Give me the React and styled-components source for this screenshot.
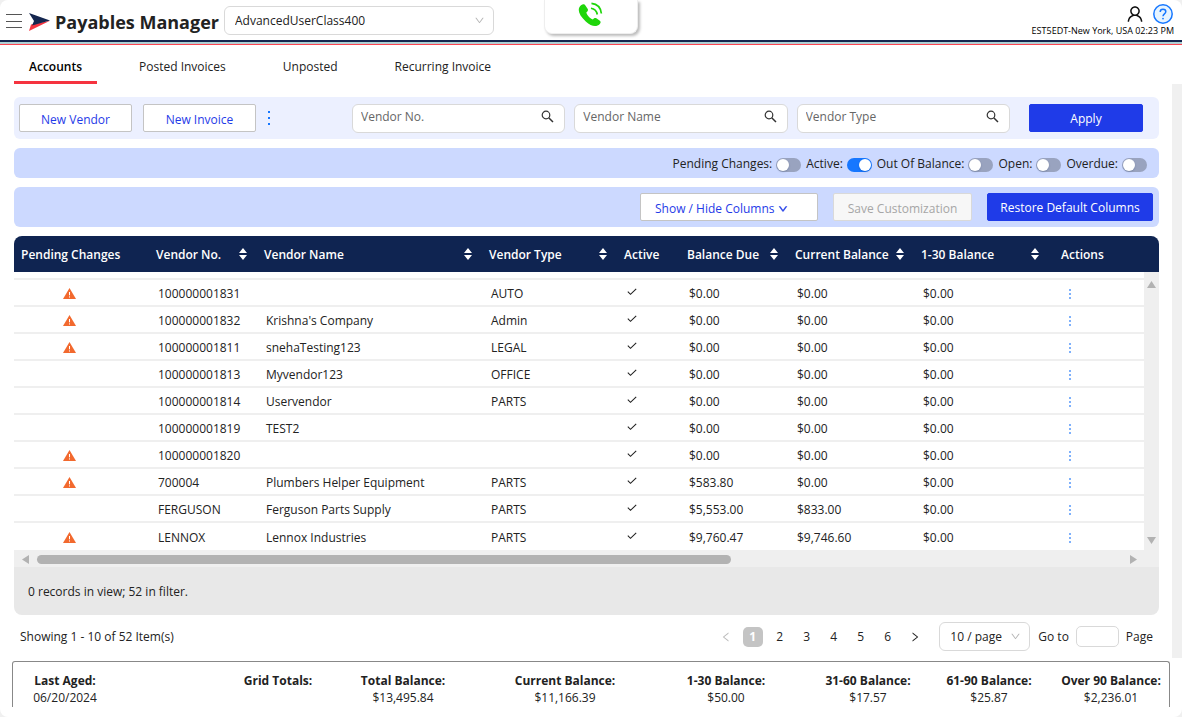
import React from "react";
import styled, { createGlobalStyle, css } from "styled-components";
import {
  AiOutlineUser,
  AiOutlineDown,
  AiOutlineLeft,
  AiOutlineRight,
} from "react-icons/ai";

const GlobalStyle = createGlobalStyle`
  * { box-sizing: border-box; }
  body { margin: 0; background: #f0f0f0; }
  body, button, input, select {
    font-family: "Open Sans", "Noto Sans", sans-serif;
    font-size: 12px;
    color: #222;
  }
`;

const Page = styled.div`
  display: flex;
  flex-direction: column;
  min-height: 100vh;
  background: #fff;
  border-radius: 8px;
  overflow: hidden;
`;

// ---------- header ----------
const Header = styled.header`
  display: flex;
  align-items: center;
  height: 40px;
  padding: 0 8px 0 6px;
`;

const IconButton = styled.button`
  display: flex;
  align-items: center;
  justify-content: center;
  padding: 0;
  border: 0;
  background: none;
  color: #111;
  cursor: pointer;
`;

const RowMenu = styled(IconButton)`
  margin-left: 5px;
`;

const Logo = styled.svg`
  margin: 4px 5px 0 7px;
`;

const Title = styled.h1`
  margin: 4px 5px 0 0;
  font-size: 18px;
  line-height: 24px;
  font-weight: 700;
  white-space: nowrap;
`;

const SelectWrap = styled.div`
  display: flex;
  align-items: center;
  position: relative;
  width: ${(p) => p.$width};
  color: #b5b5b5;

  svg {
    position: absolute;
    right: ${(p) => p.$arrow};
    pointer-events: none;
  }
`;

const Select = styled.select`
  appearance: none;
  width: 100%;
  height: 29px;
  padding: 0 10px;
  border: 1px solid #d9d9d9;
  border-radius: 6px;
  background: #fff;
  cursor: pointer;
`;

const PhoneTab = styled.button`
  display: flex;
  align-items: center;
  justify-content: center;
  align-self: flex-start;
  width: 94px;
  height: 34px;
  margin-left: 50px;
  padding: 0 2px 5px 0;
  border: 1px solid #eee;
  border-top: 0;
  border-radius: 0 0 8px 8px;
  background: #fff;
  box-shadow: 2px 2px 3px #bbb;
  cursor: pointer;
`;

const UserArea = styled.div`
  display: flex;
  flex-direction: column;
  align-items: flex-end;
  margin-left: auto;
  padding-top: 1px;
`;

const UserIcons = styled.div`
  display: flex;
  align-items: center;
  gap: 8px;
  padding-right: 1px;
`;

const Clock = styled.span`
  font-size: 9px;
  line-height: 14px;
  color: #000;
`;

const Stripes = styled.div`
  height: 5px;
  background: linear-gradient(
    #14264f 2px,
    #a9d3d6 2px 3px,
    #b9c9d0 3px 4px,
    #fa4550 4px
  );
`;

// ---------- tabs ----------
const Tabs = styled.nav`
  display: flex;
  gap: 27px;
  padding-left: 14px;
`;

const Tab = styled.a`
  height: 39px;
  padding: 13px 15px 0;
  line-height: 18px;
  color: #222;
  text-decoration: none;
  ${(p) =>
    p.$active &&
    css`
      font-weight: 600;
      color: #000;
      border-bottom: 3px solid #f5333f;
    `}
`;

const Body = styled.div`
  display: flex;
  flex: 1;
`;

const Content = styled.main`
  flex: 1;
  min-width: 0;
  padding: 13px 13px 7px 14px;
`;

const PageScroll = styled.div`
  width: 10px;
  background: #f0f0f0;
`;

// ---------- toolbars ----------
const Bar = styled.div`
  display: flex;
  align-items: center;
  height: ${(p) => p.$height};
  margin-bottom: 9px;
  padding: ${(p) => p.$padding || "0 6px"};
  border-radius: 6px;
  background: ${(p) => (p.$light ? "#ecf0ff" : "#ccd9ff")};
`;

const ToolbarRight = styled(Bar)`
  justify-content: flex-end;
  gap: ${(p) => p.$gap};
`;

const Button = styled.button`
  flex: 0 0 auto;
  width: ${(p) => p.$width};
  height: 28px;
  padding: 2px 0 0;
  border: 1px solid #c4c4c4;
  border-radius: 2px;
  background: #fff;
  color: #1f3be8;
  white-space: nowrap;
  cursor: pointer;

  &:disabled {
    border-color: #d9d9d9;
    background: #f7f7f7;
    color: #a6a6a6;
    cursor: default;
  }

  ${(p) =>
    p.$primary &&
    css`
      padding: 0;
      border-color: #1f3be8;
      background: #1f3be8;
      color: #fff;
    `}
`;

const MenuButton = styled(Button)`
  padding: 2px 14px 0;
  text-align: left;

  svg {
    vertical-align: -1px;
    stroke: currentColor;
    stroke-width: 70;
  }
`;

const Actions = styled.div`
  display: flex;
  align-items: center;
  gap: 11px;
`;

const Search = styled.div`
  display: flex;
  gap: 9px;
  flex: 1;
  margin: 0 19px 0 81px;
`;

const SearchBox = styled.label`
  display: flex;
  flex: 1;
  align-items: center;
  height: 29px;
  padding: 0 10px 3px 8px;
  border: 1px solid #d9d9d9;
  border-radius: 6px;
  background: #fff;

  input {
    flex: 1;
    min-width: 0;
    padding: 0;
    border: 0;
    outline: 0;
    background: none;
  }

  input::placeholder {
    color: #666;
  }
`;

const Toggle = styled.label`
  display: flex;
  align-items: center;
  gap: 4px;
  line-height: 18px;
  white-space: nowrap;

  input {
    appearance: none;
    display: flex;
    width: 25px;
    height: 14px;
    margin: 1px 0 0;
    padding: 1px;
    border-radius: 7px;
    background: #99a3bf;
    cursor: pointer;
  }

  input::before {
    content: "";
    width: 12px;
    height: 12px;
    border-radius: 6px;
    background: #fff;
    box-shadow: 0 1px 2px #00235033;
  }

  input:checked {
    justify-content: flex-end;
    background: #1677ff;
  }
`;

// ---------- grid ----------
const Panel = styled.section`
  border-radius: 8px;
  overflow: hidden;
`;

const GridArea = styled.div`
  display: flex;
`;

const Table = styled.table`
  flex: 1;
  width: 100%;
  min-width: 0;
  table-layout: fixed;
  border-collapse: separate;
  border-spacing: 0;
`;

const Th = styled.th`
  height: 36px;
  padding: 0 ${(p) => p.$end || "10px"} 0 7px;
  background: #0f2451;
  color: #fff;
  font-weight: 600;
  text-align: left;
  white-space: nowrap;
`;

const ThInner = styled.div`
  display: flex;
  align-items: center;
  justify-content: space-between;
`;

const Td = styled.td`
  height: 27px;
  padding: 2px 0 0 9px;
  border-bottom: 2px solid #efefef;
  line-height: 18px;
  white-space: nowrap;

  tr:last-child > & {
    border-bottom: 0;
  }

  svg {
    display: block;
  }
`;

const ScrolledRow = styled.td`
  height: 8px;
  padding: 0;
  border-bottom: 2px solid #efefef;
`;

const VerticalScroll = styled.div`
  display: flex;
  flex-direction: column;
  justify-content: space-between;
  align-items: center;
  width: 15px;
  padding: 8px 0 5px;
  border-top: 36px solid #0f2451;
  background: #efefef;
`;

const HorizontalScroll = styled.div`
  display: flex;
  align-items: center;
  height: 17px;
  padding: 1px 22px 0 8px;
  background: #efefef;
`;

const Track = styled.div`
  flex: 1;
  margin: 0 8px;
`;

const Thumb = styled.div`
  width: 64%;
  height: 9px;
  border-radius: 5px;
  background: #b2b2b2;
`;

const Footer = styled.footer`
  height: 48px;
  padding: 16px 14px 0;
  background: #e8e8e8;
  line-height: 18px;
`;

// ---------- paging ----------
const Paging = styled.div`
  display: flex;
  align-items: center;
  justify-content: space-between;
  padding: 7px 6px 0;
`;

const Pages = styled.div`
  display: flex;
  align-items: center;
`;

const PageButton = styled.button`
  display: flex;
  align-items: center;
  justify-content: center;
  width: 27px;
  height: 20px;
  padding: 0;
  border: 0;
  background: none;
  cursor: pointer;

  span {
    width: 20px;
    line-height: 20px;
    border-radius: 5px;
  }

  &[aria-current] span {
    background: #c4c4c4;
    color: #fff;
    font-weight: 700;
  }

  &:disabled {
    color: #bbb;
  }
`;

const GoTo = styled.label`
  display: flex;
  align-items: center;
  gap: 7px;
  margin-left: 8px;

  input {
    width: 43px;
    height: 21px;
    border: 1px solid #d9d9d9;
    border-radius: 5px;
  }
`;

const PageSize = styled.div`
  margin-left: 11px;
`;

// ---------- totals ----------
const Totals = styled.dl`
  display: grid;
  grid-template-columns: 104fr 200fr 172fr 152fr 170fr 114fr 128fr 116fr;
  height: 46px;
  margin: 3px 12px 10px;
  border: 1px solid #888;
  border-bottom: 0;
  border-radius: 3px 3px 0 0;
  padding-top: 10px;

  div {
    text-align: center;
    line-height: 17px;
    white-space: nowrap;
  }

  div:nth-child(2) {
    padding-left: 122px;
  }

  dt {
    font-weight: 700;
  }

  dd {
    margin: 0;
  }
`;

const HelpIcon = () => (
  <svg width="20" height="20" viewBox="0 0 20 20" fill="none" stroke="#1677ff">
    <circle cx="10" cy="10" r="9.2" fill="#e6f4ff" strokeWidth="1.5" />
    <path
      d="M7.200 8C7.200 6.300 8.400 5.300 10 5.300S12.800 6.300 12.800 7.800C12.800 9.900 10 9.900 10 12.200"
      strokeWidth="1.5"
    />
    <circle cx="10" cy="14.600" r=".9" fill="#1677ff" stroke="none" />
  </svg>
);

const PhoneIcon = () => (
  <svg width="26" height="27" viewBox="0 0 27 28" fill="#1fd60a">
    <path d="M4.500 4.200C6.200 2.800 7.800 3.200 8.900 4.800L11 8c.8 1.300.4 2.300-1.300 3.900.6 2.800 3.500 6 6.800 7.200 1.500-1.600 2.500-1.800 3.600-1.100l3.300 2.300c1.400 1 1.500 2.300.3 3.500-3.300 3.500-8.700 3-14.600-2.600C1.800 14.500-.5 8.200 4.500 4.200z" />
    <path
      d="M14.500 7.500c3.600.6 6 3 6.600 6.500M15 2.500c5.700.6 9.700 4.600 10.300 10.500"
      fill="none"
      stroke="#1fd60a"
      strokeWidth="1.800"
    />
  </svg>
);

const SearchIcon = () => (
  <svg width="13" height="13" viewBox="0 0 13 13" fill="none" stroke="#333">
    <circle cx="5" cy="5" r="3.800" strokeWidth="1.200" />
    <path d="M7.700 7.700 12 12" strokeWidth="1.500" />
  </svg>
);

const SortIcon = () => (
  <svg width="8" height="12" viewBox="0 0 8 12" fill="#fff">
    <path d="M4 0 8 5H0zM4 12 0 7h8z" />
  </svg>
);

const WarningIcon = () => (
  <svg width="13" height="11" viewBox="0 0 13 11">
    <path d="M6.500 0 13 11H0z" fill="#f2692e" />
    <path d="M6.500 4v3.300M6.500 8.400v1.100" stroke="#fff" />
  </svg>
);

const CheckIcon = () => (
  <svg width="10" height="8" viewBox="0 0 10 8" fill="none" stroke="#222">
    <path d="M.8 3.600 3.500 6.300 9.200.8" strokeWidth="1.100" />
  </svg>
);

const Dots = ({ size, height, color = "#1677ff" }) => (
  <svg width="4" height={height} viewBox={`0 0 4 ${height}`} fill={color}>
    {[0, 1, 2].map((i) => (
      <rect
        key={i}
        x="1"
        y={(i * (height - size)) / 2}
        width={size}
        height={size}
      />
    ))}
  </svg>
);

const Arrow = ({ d, w, h }) => (
  <svg width={w} height={h} viewBox={`0 0 ${w} ${h}`} fill="#b2b2b2">
    <path d={d} />
  </svg>
);

const PendingMark = styled.div`
  display: flex;
  justify-content: center;
  padding-right: 34px;
`;

const CheckCell = styled.div`
  padding: 0 0 4px 1px;
`;

const columns = [
  { label: "Pending Changes", width: 135 },
  { label: "Vendor No.", width: 108, sort: true },
  { label: "Vendor Name", width: 225, sort: true },
  { label: "Vendor Type", width: 135, sort: true },
  { label: "Active", width: 63 },
  { label: "Balance Due", width: 108, sort: true },
  { label: "Current Balance", width: 126, sort: true },
  { label: "1-30 Balance", width: 140, sort: true, end: "15px" },
  { label: "Actions", width: 90 },
];

const total = columns.reduce((sum, c) => sum + c.width, 0);

const Col = styled.col`
  width: ${(p) => (p.$width * 100) / total}%;
`;

// pending, number, name, type, due, current
const vendors = [
  [true, "100000001831", "", "AUTO", "$0.00", "$0.00"],
  [true, "100000001832", "Krishna's Company", "Admin", "$0.00", "$0.00"],
  [true, "100000001811", "snehaTesting123", "LEGAL", "$0.00", "$0.00"],
  [false, "100000001813", "Myvendor123", "OFFICE", "$0.00", "$0.00"],
  [false, "100000001814", "Uservendor", "PARTS", "$0.00", "$0.00"],
  [false, "100000001819", "TEST2", "", "$0.00", "$0.00"],
  [true, "100000001820", "", "", "$0.00", "$0.00"],
  [true, "700004", "Plumbers Helper Equipment", "PARTS", "$583.80", "$0.00"],
  [false, "FERGUSON", "Ferguson Parts Supply", "PARTS", "$5,553.00", "$833.00"],
  [true, "LENNOX", "Lennox Industries", "PARTS", "$9,760.47", "$9,746.60"],
];

const totals = [
  ["Last Aged:", "06/20/2024"],
  ["Grid Totals:", ""],
  ["Total Balance:", "$13,495.84"],
  ["Current Balance:", "$11,166.39"],
  ["1-30 Balance:", "$50.00"],
  ["31-60 Balance:", "$17.57"],
  ["61-90 Balance:", "$25.87"],
  ["Over 90 Balance:", "$2,236.01"],
];

const TopBar = () => (
  <Header>
    <IconButton aria-label="Menu">
      <svg width="16" height="18" viewBox="0 0 16 18" stroke="#555">
        <path d="M0 3.500h16M0 10.500h16M0 16.500h16" />
      </svg>
    </IconButton>
    <Logo width="21" height="18" viewBox="0 0 21 18">
      <path d="M0 18 2 11.500 21 7.800z" fill="#f5333f" />
      <path d="M0 0 21 7.600 3 12.500 5 8z" fill="#14264f" />
    </Logo>
    <Title>Payables Manager</Title>
    <SelectWrap $width="270px" $arrow="9px">
      <Select aria-label="User class">
        <option>AdvancedUserClass400</option>
      </Select>
      <AiOutlineDown size={11} />
    </SelectWrap>
    <PhoneTab aria-label="Call">
      <PhoneIcon />
    </PhoneTab>
    <UserArea>
      <UserIcons>
        <IconButton aria-label="Account">
          <AiOutlineUser size={20} />
        </IconButton>
        <IconButton aria-label="Help">
          <HelpIcon />
        </IconButton>
      </UserIcons>
      <Clock>EST5EDT-New York, USA 02:23 PM</Clock>
    </UserArea>
  </Header>
);

const VendorRow = ({ vendor }) => {
  const [pending, number, name, type, due, current] = vendor;
  return (
    <tr>
      <Td>
        <PendingMark>{pending && <WarningIcon />}</PendingMark>
      </Td>
      <Td>{number}</Td>
      <Td>{name}</Td>
      <Td>{type}</Td>
      <Td>
        <CheckCell>
          <CheckIcon />
        </CheckCell>
      </Td>
      <Td>{due}</Td>
      <Td>{current}</Td>
      <Td>$0.00</Td>
      <Td>
        <RowMenu aria-label="Row actions">
          <Dots size={2} height={10} color="#7fb1fb" />
        </RowMenu>
      </Td>
    </tr>
  );
};

const VendorGrid = () => (
  <Panel>
    <GridArea>
      <Table>
        <colgroup>
          {columns.map((c) => (
            <Col key={c.label} $width={c.width} />
          ))}
        </colgroup>
        <thead>
          <tr>
            {columns.map((c) => (
              <Th key={c.label} $end={c.end}>
                <ThInner>
                  {c.label}
                  {c.sort && <SortIcon />}
                </ThInner>
              </Th>
            ))}
          </tr>
        </thead>
        <tbody>
          <tr>
            <ScrolledRow colSpan={9} />
          </tr>
          {vendors.map((v) => (
            <VendorRow key={v[1]} vendor={v} />
          ))}
        </tbody>
      </Table>
      <VerticalScroll>
        <Arrow w={9} h={8} d="M4.500 1 9 8H0z" />
        <Arrow w={9} h={8} d="M0 0h9L4.500 7z" />
      </VerticalScroll>
    </GridArea>
    <HorizontalScroll>
      <Arrow w={7} h={9} d="M7 0v9L0 4.500z" />
      <Track>
        <Thumb />
      </Track>
      <Arrow w={7} h={9} d="M0 0v9l7-4.500z" />
    </HorizontalScroll>
    <Footer>0 records in view; 52 in filter.</Footer>
  </Panel>
);

const Pagination = () => (
  <Paging>
    <span>Showing 1 - 10 of 52 Item(s)</span>
    <Pages>
      <PageButton disabled aria-label="Previous page">
        <AiOutlineLeft size={12} />
      </PageButton>
      {[1, 2, 3, 4, 5, 6].map((n) => (
        <PageButton key={n} aria-current={n === 1 ? "page" : undefined}>
          <span>{n}</span>
        </PageButton>
      ))}
      <PageButton aria-label="Next page">
        <AiOutlineRight size={12} />
      </PageButton>
      <PageSize>
        <SelectWrap $width="91px" $arrow="9px">
          <Select aria-label="Page size">
            <option>10 / page</option>
          </Select>
          <AiOutlineDown size={11} />
        </SelectWrap>
      </PageSize>
      <GoTo>
        Go to
        <input type="text" />
        Page
      </GoTo>
    </Pages>
  </Paging>
);

const App = () => (
  <>
    <GlobalStyle />
    <Page>
      <TopBar />
      <Stripes />
      <Tabs>
        <Tab href="#accounts" $active>Accounts</Tab>
        <Tab href="#posted">Posted Invoices</Tab>
        <Tab href="#unposted">Unposted</Tab>
        <Tab href="#recurring">Recurring Invoice</Tab>
      </Tabs>
      <Body>
        <Content>
          <Bar $light $height="42px" $padding="0 16px 0 5px">
            <Actions>
              <Button $width="113px">New Vendor</Button>
              <Button $width="113px">New Invoice</Button>
              <IconButton aria-label="More">
                <Dots size={2} height={14} />
              </IconButton>
            </Actions>
            <Search>
              {["Vendor No.", "Vendor Name", "Vendor Type"].map((label) => (
                <SearchBox key={label}>
                  <input type="text" placeholder={label} aria-label={label} />
                  <SearchIcon />
                </SearchBox>
              ))}
            </Search>
            <Button $primary $width="114px">Apply</Button>
          </Bar>
          <ToolbarRight $height="30px" $gap="5px" $padding="2px 12px 0">
            {["Pending Changes", "Active", "Out Of Balance", "Open", "Overdue"].map(
              (label) => (
                <Toggle key={label}>
                  {label}:
                  <input type="checkbox" role="switch" defaultChecked={label === "Active"} />
                </Toggle>
              )
            )}
          </ToolbarRight>
          <ToolbarRight $height="40px" $gap="15px">
            <MenuButton $width="178px">
              Show / Hide Columns <AiOutlineDown size={10} />
            </MenuButton>
            <Button disabled $width="139px">Save Customization</Button>
            <Button $primary $width="166px">Restore Default Columns</Button>
          </ToolbarRight>
          <VendorGrid />
          <Pagination />
        </Content>
        <PageScroll />
      </Body>
      <Totals>
        {totals.map(([label, value]) => (
          <div key={label}>
            <dt>{label}</dt>
            <dd>{value}</dd>
          </div>
        ))}
      </Totals>
    </Page>
  </>
);

export default App;
